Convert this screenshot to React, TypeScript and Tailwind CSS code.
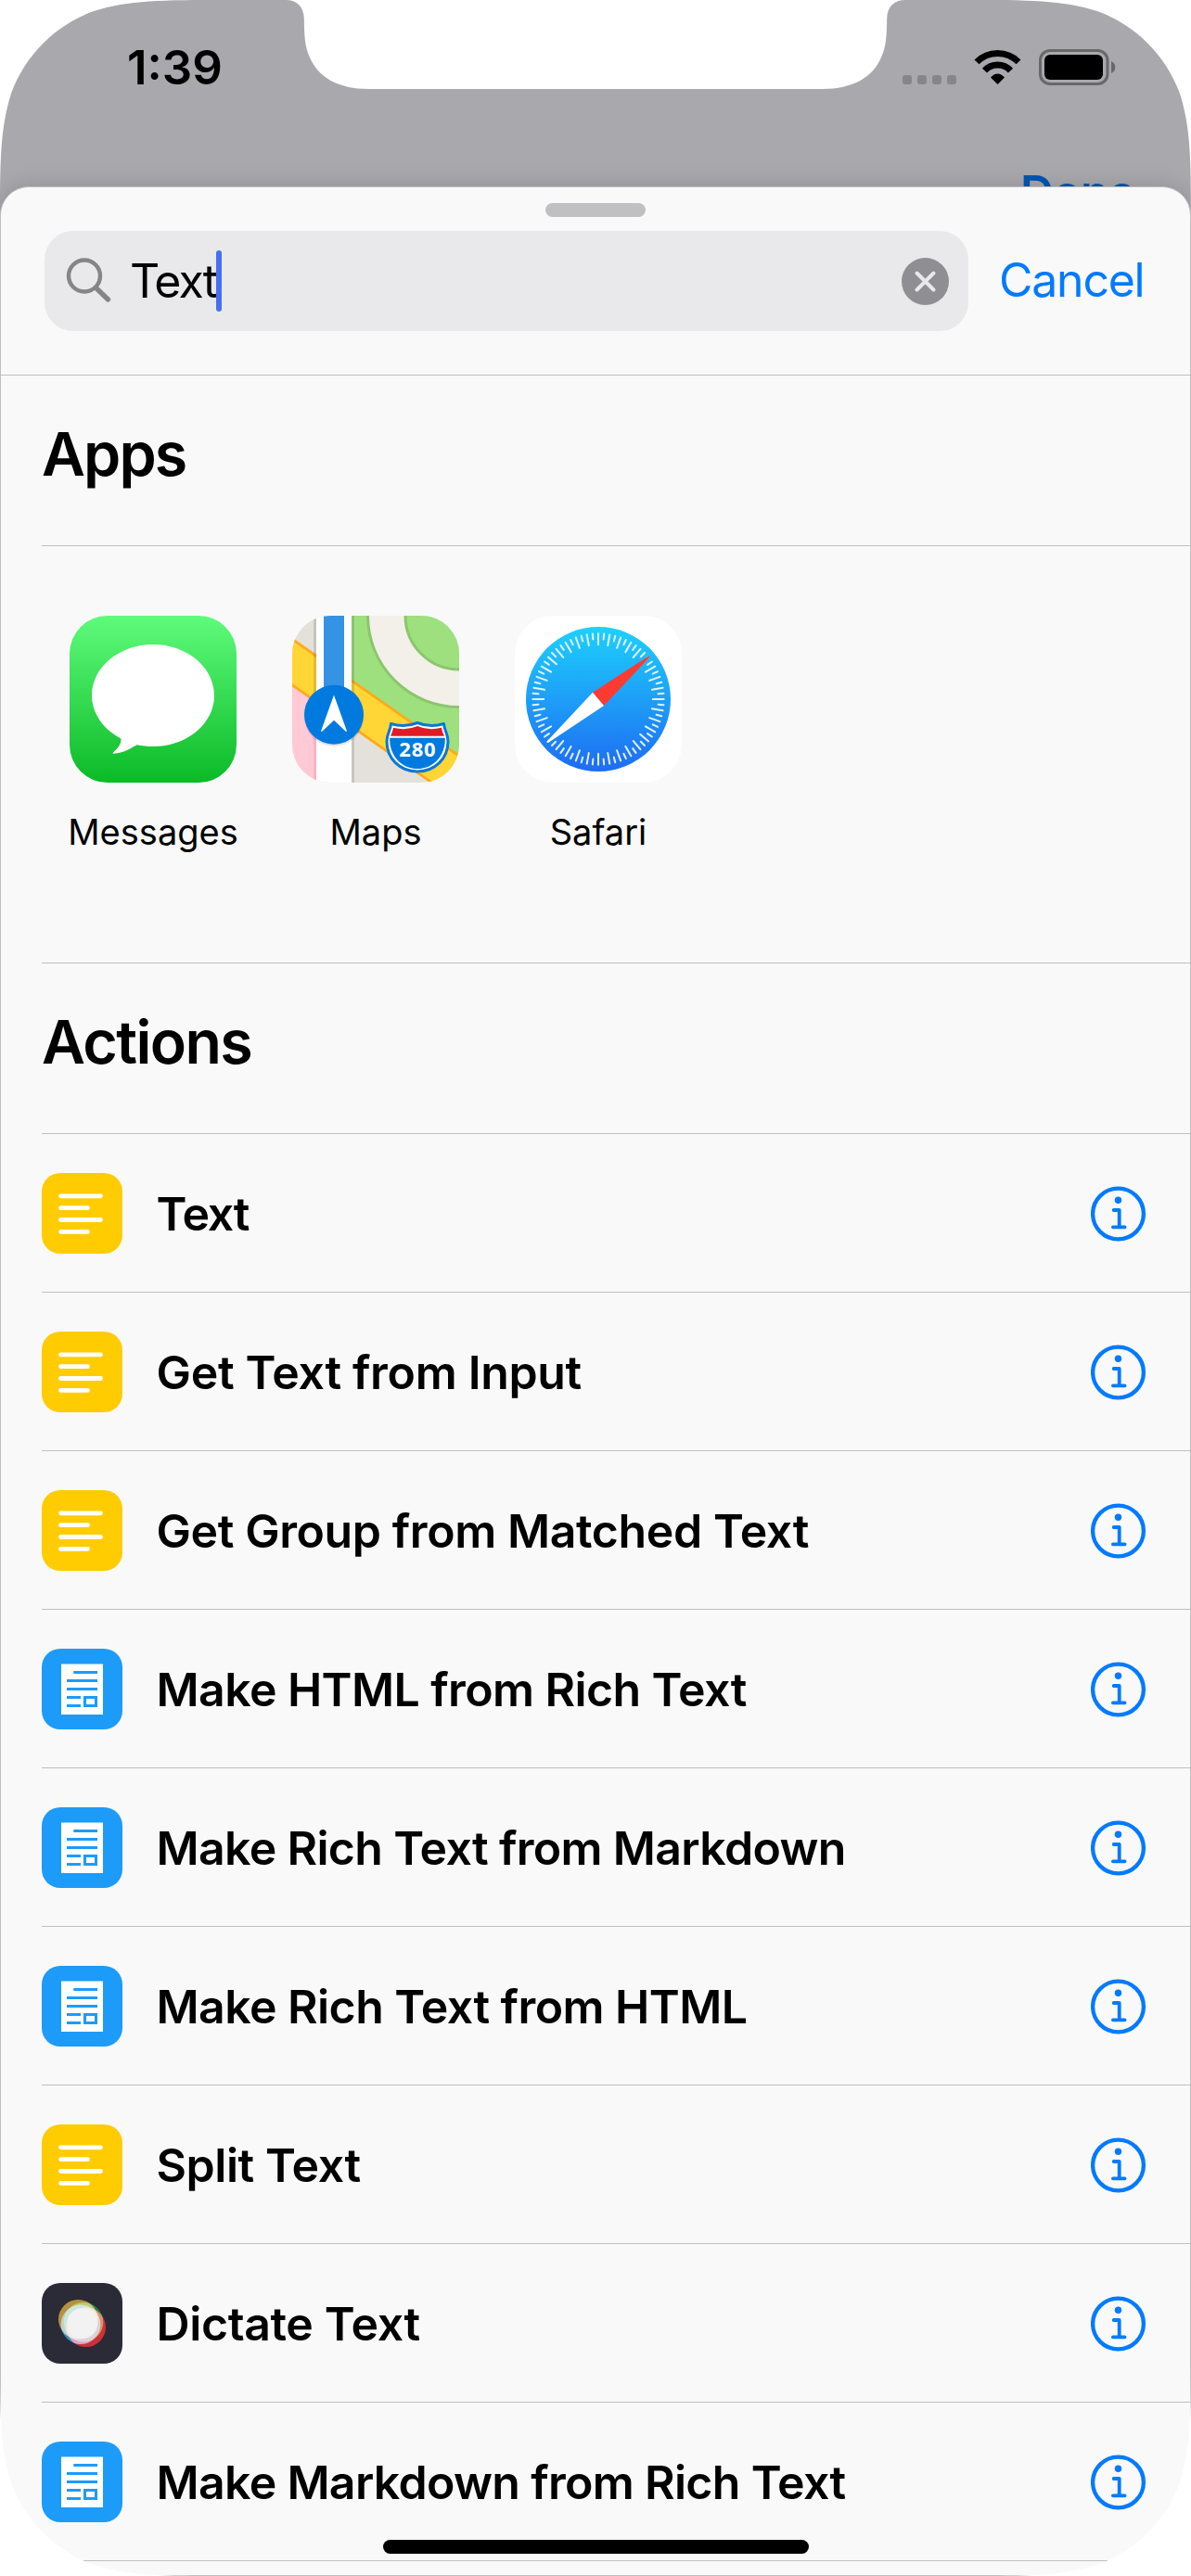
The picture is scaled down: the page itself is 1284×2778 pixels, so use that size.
import type { ReactNode } from "react";

function StatusBar() {
  return (
    <div className="flex h-[201px] w-full items-start">
      <div className="ml-[137px] mt-[42px] text-[51px] leading-[62px] font-semibold text-black">1:39</div>
      <div className="ml-auto flex h-full w-[320px] flex-col">
        <svg className="mt-[50px] h-[45px] w-[240px] shrink-0" viewBox="964 50 240 45" fill="none">
          <g fill="#868688">
            <rect x="973" y="81" width="10" height="10" rx="3.2" />
            <rect x="989" y="81" width="10" height="10" rx="3.2" />
            <rect x="1005" y="81" width="10" height="10" rx="3.2" />
            <rect x="1021" y="81" width="10" height="10" rx="3.2" />
          </g>
          <g stroke="#000" strokeWidth="7">
            <path d="M1053 66.9A31.5 31.5 0 0 1 1098 66.9" />
            <path d="M1061.5 76.2A19 19 0 0 1 1089.5 76.2" />
          </g>
          <path d="M1068 83.6Q1075.5 75.6 1083 83.6L1075.5 91Z" fill="#000" />
          <rect x="1121.5" y="54.5" width="72.5" height="36" rx="10.5" stroke="#68686a" strokeWidth="3" />
          <rect x="1126" y="59" width="63" height="27" rx="6" fill="#000" />
          <path d="M1198 66Q1202.3 68 1202.3 72.5Q1202.3 77 1198 79Z" fill="#68686a" />
        </svg>
        <div className="mt-[81px] ml-[136px] text-[50px] leading-[62px] font-semibold tracking-[-0.800px] text-[#0055b3]">
          Done
        </div>
      </div>
    </div>
  );
}

function SearchBar() {
  return (
    <div className="mt-[15px] flex items-center pl-[47px]">
      <div className="flex h-[108px] w-[996px] items-center rounded-[31px] bg-[#e9e9eb]">
        <svg className="ml-[21px] h-[54px] w-[54px]" viewBox="0 0 54 54" fill="none" stroke="#858588" strokeLinecap="round">
          <circle cx="22" cy="21.5" r="17" strokeWidth="4.4" />
          <path d="M34.5 34.5L47.5 47" strokeWidth="5.4" />
        </svg>
        <div className="ml-[17px] w-[92.5px] text-[50px] leading-[64px] tracking-[-2px] whitespace-nowrap text-black">
          Text
        </div>
        <div className="h-[66px] w-[6px] rounded-full bg-[#466ff0]" />
        <svg className="mr-[21px] ml-auto h-[51px] w-[51px]" viewBox="0 0 51 51">
          <circle cx="25.5" cy="25.5" r="25.5" fill="#8e8e93" />
          <path d="M16.5 16.5L34.5 34.5M34.5 16.5L16.5 34.5" stroke="#e9e9eb" strokeWidth="4" strokeLinecap="round" />
        </svg>
      </div>
      <div className="-mt-[3px] ml-[33px] text-[50px] leading-[64px] tracking-[-1.25px] text-[#007aff]">Cancel</div>
    </div>
  );
}

function MessagesIcon() {
  return (
    <svg className="h-[180px] w-[180px] rounded-[41px]" viewBox="0 0 180 180">
      <defs>
        <linearGradient id="messages" x1="0" y1="0" x2="0" y2="1">
          <stop offset="0" stopColor="#5ffb7b" />
          <stop offset="1" stopColor="#0bba27" />
        </linearGradient>
      </defs>
      <rect width="180" height="180" fill="url(#messages)" />
      <path
        fill="#fff"
        d="M90 31C126.500 31 156 55.600 156 86C156 116.400 126.500 141 90 141C84 141 78 140.300 72.500 139.200C66 143 58 148 47.500 148.700C46.500 148.700 46.600 147.800 47.300 147.200C51.500 143.700 56.500 137.500 55.300 132.500C36.500 122.500 24 105.500 24 86C24 55.600 53.500 31 90 31Z"
      />
    </svg>
  );
}

function MapsIcon() {
  return (
    <svg className="h-[180px] w-[180px] rounded-[41px]" viewBox="0 0 180 180">
      <rect width="180" height="180" fill="#e4e1da" />
      <path d="M64 0H180V151L64 69Z" fill="#9ee07d" />
      <circle cx="180" cy="0" r="98.500" fill="#f3f0ea" stroke="#8bc66d" strokeWidth="3" />
      <circle cx="180" cy="0" r="58" fill="#9ee07d" stroke="#8bc66d" strokeWidth="3" />
      <path d="M0 73L26 91V180H0Z" fill="#ffcad5" />
      <path d="M-4 22.400L184 154V203.400L-4 71.800Z" fill="#ffd635" stroke="#ffa91b" strokeWidth="2.800" />
      <rect x="23" width="3" height="180" fill="#000" fillOpacity=".12" />
      <rect x="23" y="90" width="3" height="90" fill="#ffb1c1" />
      <rect x="64" width="3" height="180" fill="#000" fillOpacity=".12" />
      <rect x="26" width="38" height="180" fill="#fff" />
      <rect x="34" width="22" height="90" fill="#3493e4" />
      <ellipse cx="45" cy="109" rx="32" ry="32" fill="#000" fillOpacity=".1" />
      <circle cx="45" cy="106.700" r="32" fill="#007adf" />
      <path d="M45 85.500L59 124.500L58 125L45 112.800L32 125L31 124.500Z" fill="#fff" />
      <g strokeLinejoin="round">
        <path
          d="M106.500 116.500Q121 121 135 115.500Q149 121 163.500 116.500C164 124 168 127 168 135.500C168 154 154 168 135 168C116 168 102 154 102 135.500C102 127 106 124 106.500 116.500Z"
          fill="#fff"
          stroke="#0878d4"
          strokeWidth="3"
        />
        <path d="M105.200 131.700H164.800C165.500 150 153 165 135 165C117 165 104.500 150 105.200 131.700Z" fill="#007adf" />
        <path d="M109 120.800Q123 124.500 135 119Q147 124.500 161 120.800Q161.700 125.500 164 129.800H106Q108.300 125.500 109 120.800Z" fill="#df1c26" />
      </g>
      <text x="135.300" y="151.800" textAnchor="middle" fill="#fff" className="font-['Noto_Sans'] text-[22px] font-bold tracking-[0.7px]">
        280
      </text>
    </svg>
  );
}

function SafariIcon() {
  const ticks = Array.from({ length: 72 }, (_, i) => i);
  return (
    <svg className="h-[180px] w-[180px] rounded-[41px]" viewBox="0 0 180 180">
      <defs>
        <linearGradient id="safari" x1="0" y1="0" x2="0" y2="1">
          <stop offset="0" stopColor="#1dd1fd" />
          <stop offset="1" stopColor="#1e6cf2" />
        </linearGradient>
      </defs>
      <rect width="180" height="180" fill="#fff" />
      <circle cx="90" cy="90" r="78" fill="url(#safari)" />
      <g stroke="#fff" strokeWidth="2" strokeLinecap="round" opacity=".88">
        {ticks.map((i) => (
          <path key={i} d={i % 2 ? "M90 19.300V25.200" : "M90 19.300V31.200"} transform={`rotate(${i * 5} 90 90)`} />
        ))}
      </g>
      <path d="M144.300 43.600Q145.800 43.200 145.300 44.800L96 97L84 82.700Z" fill="#ff3a30" />
      <path d="M84 82.700L96 97L36 137Q34 137.500 34.700 135.500Z" fill="#fff" />
    </svg>
  );
}

function AppTile({ name, children }: { name: string; children: ReactNode }) {
  return (
    <div className="flex w-[180px] flex-col items-center">
      {children}
      <div className="mt-[30px] text-[38px] leading-[46px] text-black">{name}</div>
    </div>
  );
}

function TextIcon() {
  return (
    <svg className="h-[87px] w-[87px] rounded-[20px]" viewBox="0 0 87 87">
      <rect width="87" height="87" fill="#ffcc02" />
      <path d="M20.500 24.800H63.500M20.500 37.700H49.500M20.500 50.500H63.500M20.500 63.400H49.500" stroke="#fff" strokeWidth="4.800" strokeLinecap="round" />
    </svg>
  );
}

function DocIcon() {
  return (
    <svg className="h-[87px] w-[87px] rounded-[20px]" viewBox="0 0 87 87">
      <rect width="87" height="87" fill="#1d9bf9" />
      <rect x="21" y="16.500" width="45" height="54.500" fill="#fff" />
      <g stroke="#1d9bf9" strokeWidth="3" fill="none">
        <path d="M34.300 25.500H60M27 34.500H60M27 43.500H60M27 52.500H42M27 61.500H42" />
        <rect x="46.500" y="52.500" width="12" height="9" />
      </g>
    </svg>
  );
}

function DictateIcon() {
  return (
    <svg className="h-[87px] w-[87px] rounded-[20px]" viewBox="0 0 87 87">
      <rect width="87" height="87" fill="#2a2b37" />
      <g className="isolate">
        <circle cx="39.300" cy="39.200" r="21.300" fill="#b4923e" />
        <circle className="mix-blend-screen" cx="45" cy="42.300" r="21.300" fill="#2b8048" />
        <circle className="mix-blend-screen" cx="47.700" cy="47.700" r="21.300" fill="#cf3036" />
        <circle className="mix-blend-screen" cx="42" cy="44.700" r="21.300" fill="#2f90bc" />
      </g>
      <circle cx="43.700" cy="43.700" r="16.400" fill="#f2f2f2" />
    </svg>
  );
}

function InfoIcon() {
  return (
    <svg className="h-[60px] w-[60px]" viewBox="0 0 60 60" fill="none" stroke="#007aff" strokeLinecap="round" strokeLinejoin="round">
      <circle cx="29.500" cy="30" r="27.400" strokeWidth="4.300" />
      <circle cx="29.500" cy="15.300" r="3.700" fill="#007aff" stroke="none" />
      <path d="M24.700 26H30.700V44M23.900 44.300H36.600" strokeWidth="3.800" />
    </svg>
  );
}

const icons = { text: TextIcon, doc: DocIcon, dictate: DictateIcon };

const actions: { label: string; icon: keyof typeof icons; tracking: string }[] = [
  { label: "Text", icon: "text", tracking: "tracking-[-1.200px]" },
  { label: "Get Text from Input", icon: "text", tracking: "tracking-[-0.320px]" },
  { label: "Get Group from Matched Text", icon: "text", tracking: "tracking-[-0.400px]" },
  { label: "Make HTML from Rich Text", icon: "doc", tracking: "tracking-[-0.590px]" },
  { label: "Make Rich Text from Markdown", icon: "doc", tracking: "tracking-[-0.670px]" },
  { label: "Make Rich Text from HTML", icon: "doc", tracking: "tracking-[-0.560px]" },
  { label: "Split Text", icon: "text", tracking: "tracking-[-0.450px]" },
  { label: "Dictate Text", icon: "dictate", tracking: "tracking-[-0.370px]" },
  { label: "Make Markdown from Rich Text", icon: "doc", tracking: "tracking-[-0.680px]" },
];

function SectionTitle({ children, tracking }: { children: ReactNode; tracking: string }) {
  return (
    <div className={`flex h-[183px] items-center pb-[14px] text-[64.5px] leading-[80px] font-semibold text-black ${tracking}`}>
      {children}
    </div>
  );
}

/* Display corner: continuous-curvature shape, drawn for the top-left and mirrored elsewhere. */
function ScreenCorner({ className }: { className: string }) {
  return (
    <svg className={`absolute h-[245px] w-[245px] ${className}`} viewBox="0 0 245 245">
      <path
        fill="#fff"
        d="M0 0H244.600C174.200 0 139 0 101 12C59.700 27 27 59.700 12 101C0 139 0 174.200 0 244.600Z"
      />
    </svg>
  );
}

export default function App() {
  return (
    <div className="relative flex h-[2778px] w-[1284px] flex-col overflow-hidden bg-[#a9a8ad] font-['Inter',sans-serif]">
      <StatusBar />
      <div className="relative flex h-[2577px] flex-col rounded-t-[31px] border border-[#bfbfc0] bg-[#f9f9f9] shadow-[0_0_24px_rgba(0,0,0,0.16)]">
        <div className="mt-[17px] h-[15px] w-[108px] shrink-0 self-center rounded-full bg-[#c0c0c2]" />
        <SearchBar />
        <div className="mt-[47px] border-t border-[#bfbfc0] pl-[44px]">
          <SectionTitle tracking="tracking-[-1.900px]">Apps</SectionTitle>
          <div className="flex h-[450px] gap-[60px] border-t border-[#bfbfc0] pt-[75px] pl-[30px]">
            <AppTile name="Messages">
              <MessagesIcon />
            </AppTile>
            <AppTile name="Maps">
              <MapsIcon />
            </AppTile>
            <AppTile name="Safari">
              <SafariIcon />
            </AppTile>
          </div>
          <div className="border-t border-[#bfbfc0]">
            <SectionTitle tracking="tracking-[-1.600px]">Actions</SectionTitle>
          </div>
          {actions.map(({ label, icon, tracking }) => {
            const Icon = icons[icon];
            return (
              <div key={label} className="flex h-[171px] items-center border-t border-[#bfbfc0] pt-px pr-[47px]">
                <Icon />
                <div className={`ml-[36.500px] flex-1 text-[50px] leading-[64px] font-semibold whitespace-nowrap text-black ${tracking}`}>
                  {label}
                </div>
                <InfoIcon />
              </div>
            );
          })}
          <div className="border-t border-[#bfbfc0]" />
        </div>
      </div>

      {/* Display cutouts and home indicator lie over the screen content. */}
      <ScreenCorner className="top-0 left-0" />
      <ScreenCorner className="top-0 right-0 -scale-x-100" />
      <ScreenCorner className="bottom-0 left-0 -scale-y-100" />
      <ScreenCorner className="right-0 bottom-0 -scale-100" />
      <svg className="absolute top-0 left-[308px] h-[96px] w-[668px]" viewBox="308 0 668 96">
        <path
          fill="#fff"
          d="M308 0C320 0 327.500 7 327.800 20C328 38 328.500 50 334 62C343 83 364 96 398 96H886C920 96 941 83 950 62C955.500 50 956 38 956.200 20C956.500 7 964 0 976 0Z"
        />
      </svg>
      <div className="absolute bottom-[24px] left-[413px] h-[15px] w-[459px] rounded-full bg-black" />
    </div>
  );
}
